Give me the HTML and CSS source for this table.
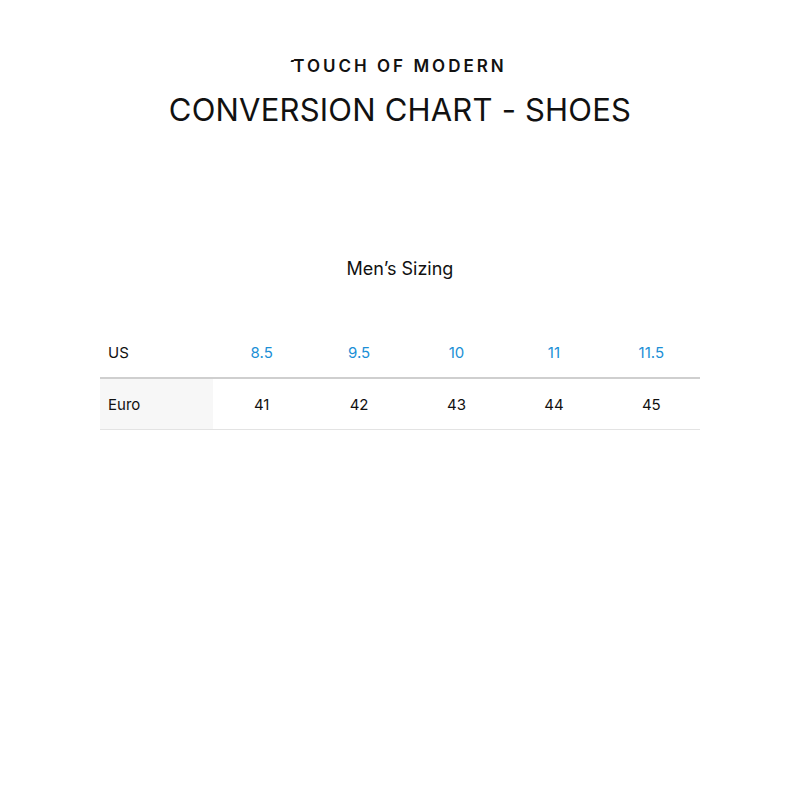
FILE: index.html
```html
<!DOCTYPE html>
<html>
<head>
<meta charset="utf-8">
<link rel="stylesheet" href="styles.css">
</head>
<body>
<div class="page">
  <div class="logo"><span class="tick"></span>TOUCH OF MODERN</div>
  <h1 class="title">CONVERSION CHART - SHOES</h1>
  <h2 class="subtitle">Men’s Sizing</h2>
  <div class="chart">
    <div class="row head">
      <div class="label">US</div>
      <div class="cell us">8.5</div>
      <div class="cell us">9.5</div>
      <div class="cell us">10</div>
      <div class="cell us">11</div>
      <div class="cell us">11.5</div>
    </div>
    <div class="row body">
      <div class="label shaded">Euro</div>
      <div class="cell">41</div>
      <div class="cell">42</div>
      <div class="cell">43</div>
      <div class="cell">44</div>
      <div class="cell">45</div>
    </div>
  </div>
</div>
</body>
</html>
```
FILE: styles.css
```css
html, body {
  margin: 0;
  padding: 0;
  background: #ffffff;
}
body {
  font-family: "Inter", "Lato", sans-serif;
  color: #111;
}
.page {
  width: 600px;
  margin: 0 auto;
  padding-top: 56px;
  display: flex;
  flex-direction: column;
  align-items: center;
}
.logo {
  position: relative;
  font-size: 17px;
  line-height: 20px;
  font-weight: 600;
  letter-spacing: 3px;
  color: #111;
}
.tick {
  position: absolute;
  left: -2px;
  top: 4px;
  width: 3px;
  height: 2px;
  background: #111;
  transform: skewX(-30deg);
}
.title {
  margin: 14px 0 0;
  font-size: 31px;
  line-height: 40px;
  font-weight: 400;
  letter-spacing: 0.2px;
  color: #111;
}
.subtitle {
  margin: 127px 0 0;
  font-size: 18px;
  line-height: 24px;
  font-weight: 400;
  color: #111;
}
.chart {
  align-self: stretch;
  margin-top: 46px;
  font-size: 15px;
}
.row {
  display: grid;
  grid-template-columns: 113px repeat(5, 1fr);
  height: 50px;
  align-items: stretch;
}
.row.head {
  border-bottom: 2px solid #cfcfcf;
}
.row.body {
  border-bottom: 1px solid #e3e3e3;
}
.label {
  display: flex;
  align-items: center;
  padding-left: 8px;
}
.label.shaded {
  background: #f7f7f7;
}
.cell {
  display: flex;
  align-items: center;
  justify-content: center;
}
.cell.us {
  color: #1b8fd6;
}
```
